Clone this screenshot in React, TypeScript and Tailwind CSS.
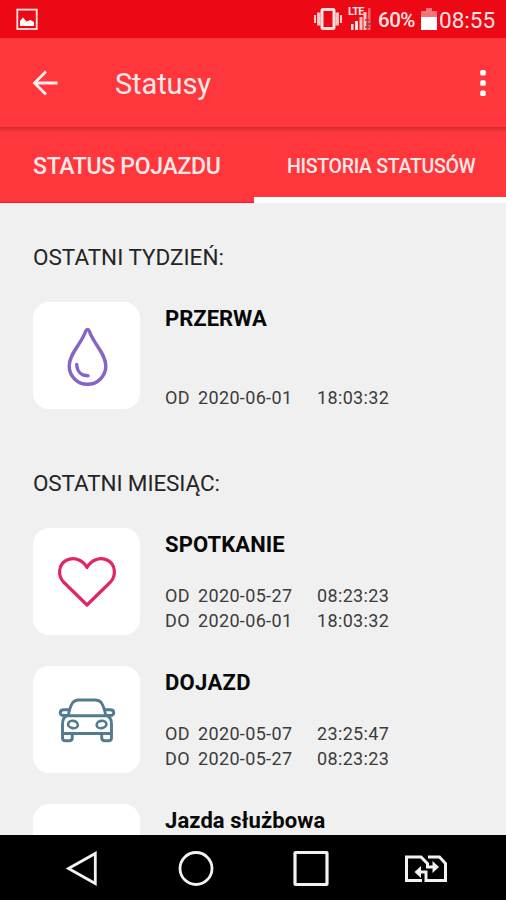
import type { ReactNode } from "react";

type Stamp = { label: string; date: string; time: string };

function Drop() {
  return (
    <svg className="h-[107px] w-[107px]" viewBox="0 0 107 107" fill="none" stroke="#8465c6" strokeWidth="3.4" strokeLinecap="round" strokeLinejoin="round">
      <path d="M54.5 27.5C53.4 27.5 53 28.3 52.6 29.3C48.5 42 36.2 51.5 36.2 64A18.3 18.3 0 0 0 72.8 64C72.8 51.5 60.5 42 56.4 29.3C56 28.3 55.6 27.5 54.5 27.5Z" />
      <path d="M43.7 62.5C44 69.5 48.5 73.8 55 73.8" />
    </svg>
  );
}

function Heart() {
  return (
    <svg className="h-[107px] w-[107px]" viewBox="0 0 107 107" fill="none" stroke="#e0266b" strokeWidth="3.2" strokeLinejoin="round">
      <path d="M54 77L30.500 54C24.500 47.500 25.500 36.500 33 32.500C40.500 28.500 49.500 31.500 54 39.500C58.500 31.500 67.500 28.500 75 32.500C82.500 36.500 83.500 47.500 77.500 54Z" />
    </svg>
  );
}

function Car() {
  return (
    <svg className="h-[107px] w-[107px]" viewBox="0 0 107 107" fill="none" stroke="#527b8e" strokeWidth="2.9" strokeLinejoin="round" strokeLinecap="round">
      <path d="M35.500 48.500C36.500 43 38 39 39.800 36.500C41.500 34.500 43.500 34 46 34H62C64.500 34 66.500 34.500 68.200 36.500C70 39 71.500 43 72.500 48.500" />
      <path d="M35 49.700H73C77 50.500 78.500 54 78.500 58V66.500Q78.500 67.500 77 67.500H31Q29.500 67.500 29.500 66.500V58C29.500 54 31 50.500 35 49.700Z" />
      <path d="M36 43.800H31Q27.200 43.800 27.200 46.800Q27.200 49.500 31 49.500H35M72 43.800H77Q80.800 43.800 80.800 46.800Q80.800 49.500 77 49.500H73" />
      <path d="M29.500 67V71.500Q29.500 74.800 32.500 74.800H36Q39.300 74.800 39.300 71.500V68M78.500 67V71.500Q78.500 74.800 75.500 74.800H72Q68.700 74.800 68.700 71.500V68" />
      <ellipse cx="40" cy="58.500" rx="4.900" ry="3.700" transform="rotate(10 40 58.500)" strokeWidth="2.600" />
      <ellipse cx="68.500" cy="58.500" rx="4.900" ry="3.700" transform="rotate(-10 68.500 58.500)" strokeWidth="2.600" />
    </svg>
  );
}

function Entry({ title, icon, stamps, titleClass }: { title: string; icon?: ReactNode; stamps: Stamp[]; titleClass: string }) {
  return (
    <article className="flex h-[107px] shrink-0 gap-[25px]">
      <div className="h-[107px] w-[107px] shrink-0 rounded-[16px] bg-white">{icon}</div>
      <div className="flex flex-1 flex-col justify-between">
        <h3 className={`mt-[4px] text-[22px] leading-[25px] font-bold whitespace-nowrap text-[#080808] ${titleClass}`}>{title}</h3>
        <div className={`text-[18px] leading-[24.5px] tracking-[0.35px] text-[#3c3c3c] ${stamps.length > 1 ? "mb-[2px]" : "-mb-px"}`}>
          {stamps.map((s) => (
            <div key={s.label} className="flex">
              <span className="w-[33px]">{s.label}</span>
              <span className="w-[119px]">{s.date}</span>
              <span>{s.time}</span>
            </div>
          ))}
        </div>
      </div>
    </article>
  );
}

function StatusBar() {
  return (
    <header className="flex h-[38px] shrink-0 items-center bg-[#ec0814] pl-[16px] text-[#ffe3e3]">
      <svg className="h-[22px] w-[22px]" viewBox="0 0 22 22">
        <rect x="1.3" y="1.6" width="19.4" height="19.4" fill="none" stroke="currentColor" strokeWidth="1.8" />
        <path d="M4 18V13L7 9.500L10.500 13.500L14.500 12L18 14V18Z" fill="white" />
      </svg>
      <svg className="ml-[276px] h-[24px] w-[28px] shrink-0" viewBox="0 0 28 24">
        <path d="M0 8H2V16H0ZM3 5.500H6.500V18.500H3ZM26 8H28V16H26ZM21.500 5.500H25V18.500H21.500Z" fill="#ffc6c6" />
        <rect x="8" y="2.500" width="12" height="19" rx="1" fill="none" stroke="currentColor" strokeWidth="3" />
      </svg>
      <div className="relative ml-[6px] h-[26px] w-[24px] shrink-0">
        <svg className="h-[26px] w-[24px]" viewBox="0 0 24 26">
          <path d="M3 18H5.500V24H3ZM7 15H10V24H7Z" fill="#ffe3e3" />
          <path d="M11.500 11H14.500V24H11.500ZM15.500 6H18.500V24H15.500Z" fill="#ffc4c4" />
          <path d="M20 2H22.500V24H19.500Z" fill="#ef686c" />
          <path d="M17 14H21M18.500 18H22.500M17 21H21" stroke="#77483d" strokeWidth="1.5" />
        </svg>
        <span className="absolute top-0 left-0 text-[11px] leading-[11px] font-bold tracking-[-0.6px]">LTE</span>
      </div>
      <span className="mt-[2px] ml-[6px] w-[43px] text-[20.5px] leading-[24px] font-medium tracking-[-0.5px] whitespace-nowrap">60%</span>
      <svg className="h-[24px] w-[16px] shrink-0" viewBox="0 0 16 24">
        <path d="M5 1H11V4H16V10H0V4H5Z" fill="#f37579" />
        <path d="M0 10H16V23H0Z" fill="white" />
      </svg>
      <span className="mt-[2px] ml-[2px] text-[22.5px] leading-[26px] tracking-[0px] whitespace-nowrap">08:55</span>
    </header>
  );
}

function NavBar() {
  return (
    <nav className="flex h-[65px] shrink-0 items-center bg-black pl-[62px] text-[#f2f2f2]">
      <svg className="h-[40px] w-[40px]" viewBox="0 0 40 40" fill="none" stroke="currentColor" strokeWidth="2.8">
        <path d="M6.500 20.500L33.300 5.500V35.500Z" />
      </svg>
      <svg className="ml-[74px] h-[40px] w-[40px]" viewBox="0 0 40 40" fill="none" stroke="currentColor" strokeWidth="2.8">
        <circle cx="20" cy="20.5" r="16" />
      </svg>
      <svg className="ml-[75px] h-[40px] w-[40px]" viewBox="0 0 40 40" fill="none" stroke="currentColor" strokeWidth="3.2">
        <rect x="4" y="4.5" width="32" height="32" rx="0.5" />
      </svg>
      <svg className="ml-[71px] h-[40px] w-[46px]" viewBox="0 0 46 40" fill="none" stroke="currentColor" strokeWidth="3">
        <path d="M20 32.500H4.500V9H19L25.500 15.500V19H33M26 9H37.500L43.500 15.500V32.500H24V24H17" />
        <path d="M30.500 13L37 19L30.500 25ZM19 18L12.500 24L19 30Z" fill="currentColor" stroke="none" />
      </svg>
    </nav>
  );
}

export default function App() {
  return (
    <div className="flex h-[900px] w-[506px] flex-col overflow-hidden bg-[#f0f0f0] font-[Roboto,sans-serif]">
      <StatusBar />
      <div className="flex h-[89px] shrink-0 items-center bg-[#ff363b] pl-[32px] text-white">
        <svg className="h-[26px] w-[26px]" viewBox="0 0 26 26" fill="none" stroke="#ffeded" strokeWidth="2.8">
          <path d="M25.500 13H2.500M14 1.500L2.500 13L14 24.500" />
        </svg>
        <h1 className="mt-[3px] ml-[57px] text-[29px] leading-[34px] tracking-[-0.1px] text-[#ffe9e9]">Statusy</h1>
        <svg className="mr-[20px] ml-auto h-[28px] w-[6px]" viewBox="0 0 6 28" fill="white">
          <rect x="0.2" y="1" width="5.6" height="5.6" rx="1.6" />
          <rect x="0.2" y="11.2" width="5.6" height="5.6" rx="1.6" />
          <rect x="0.2" y="21.4" width="5.6" height="5.6" rx="1.6" />
        </svg>
      </div>
      <div className="h-[5px] shrink-0 bg-linear-to-b from-[#cf2c30] to-[#ff363b]" />
      <div className="flex h-[71px] shrink-0 bg-[#ff363b] font-medium text-[#ffe9e9]">
        <div className="flex w-[254px] items-center border-b border-[#ee1c22] pl-[33px] text-[23px] tracking-[-0.3px] whitespace-nowrap">STATUS POJAZDU</div>
        <div className="flex flex-1 items-center border-b-[6px] border-white pt-[4px] pl-[33px] text-[19.5px] tracking-[-0.3px] whitespace-nowrap">HISTORIA STATUSÓW</div>
      </div>
      <main className="flex min-h-0 flex-1 flex-col overflow-hidden pl-[33px]">
        <h2 className="mt-[41px] shrink-0 text-[22.5px] leading-[27px] text-[#252525] tracking-[0px]">OSTATNI TYDZIEŃ:</h2>
        <div className="mt-[31px]">
          <Entry title="PRZERWA" titleClass="" icon={<Drop />} stamps={[{ label: "OD", date: "2020-06-01", time: "18:03:32" }]} />
        </div>
        <h2 className="mt-[61px] shrink-0 text-[22.5px] leading-[27px] text-[#252525] tracking-[-0.12px]">OSTATNI MIESIĄC:</h2>
        <div className="mt-[31px] flex flex-col gap-[31px]">
          <Entry title="SPOTKANIE" titleClass="tracking-[0.1px]" icon={<Heart />} stamps={[{ label: "OD", date: "2020-05-27", time: "08:23:23" }, { label: "DO", date: "2020-06-01", time: "18:03:32" }]} />
          <Entry title="DOJAZD" titleClass="tracking-[0.3px]" icon={<Car />} stamps={[{ label: "OD", date: "2020-05-07", time: "23:25:47" }, { label: "DO", date: "2020-05-27", time: "08:23:23" }]} />
          <Entry title="Jazda służbowa" titleClass="tracking-[0.1px]" stamps={[]} />
        </div>
      </main>
      <NavBar />
    </div>
  );
}
